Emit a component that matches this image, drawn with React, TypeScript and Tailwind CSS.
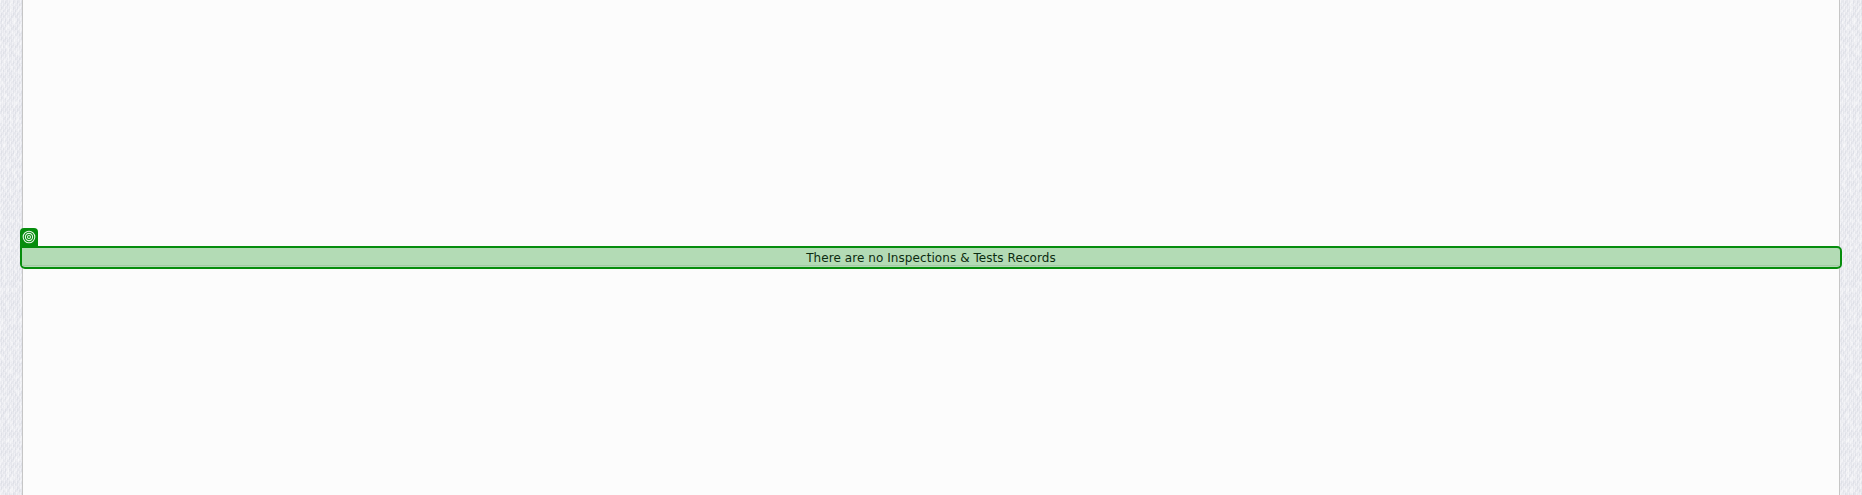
function Texture({ id }: { id: string }) {
  return (
    <svg className="block h-full w-full" aria-hidden="true">
      <defs>
        <pattern id={id} width="4" height="6" patternUnits="userSpaceOnUse">
          <rect width="4" height="6" fill="#e6e7ed" />
          <rect x="0" y="0" width="1" height="3" fill="#f0f0f5" />
          <rect x="2" y="3" width="1" height="3" fill="#f0f0f5" />
          <rect x="1" y="1" width="1" height="3" fill="#dee0e7" />
          <rect x="3" y="4" width="1" height="2" fill="#dee0e7" />
        </pattern>
        <filter id={`${id}-grain`} x="0" y="0" width="100%" height="100%">
          <feTurbulence type="fractalNoise" baseFrequency="0.3 0.16" numOctaves="3" seed="4" />
          <feColorMatrix values="0 0 0 0 1  0 0 0 0 1  0 0 0 0 1  1.4 0 0 0 -0.58" />
        </filter>
      </defs>
      <rect width="100%" height="100%" fill={`url(#${id})`} />
      <rect width="100%" height="100%" filter={`url(#${id}-grain)`} />
    </svg>
  );
}

function TargetIcon() {
  return (
    <svg className="block h-[14px] w-[14px]" viewBox="0 0 14 14" fill="none" stroke="#e3f3e4" strokeWidth="1.1" aria-hidden="true">
      <circle cx="7" cy="7" r="5.8" />
      <circle cx="7" cy="7" r="3.6" />
      <circle cx="7" cy="7" r="1.5" />
    </svg>
  );
}

export default function App() {
  return (
    <div className="flex h-[495px] w-full overflow-hidden bg-[#e9eaf0]">
      <div className="w-[22px] shrink-0">
        <Texture id="weave-left" />
      </div>
      <main className="relative min-w-0 flex-1 border-x border-[#c6c6c6] bg-[#fcfcfc]">
        <div className="absolute top-[228px] -right-[3px] -left-[3px]">
          <div className="flex h-[18px] w-[18px] items-center justify-center rounded-t-[4px] bg-[#068d0d]">
            <TargetIcon />
          </div>
          <div className="h-[23px] rounded-[5px] rounded-tl-none border-2 border-[#068d0d] bg-[#b3dbb5]">
            <div className="flex h-[18px] items-start justify-center border-b border-[#a4c9a6] pt-px font-['DejaVu_Sans',Verdana,sans-serif] text-[12px] leading-[18px] tracking-[0.07px] text-[#0c2b10]">
              There are no Inspections &amp; Tests Records
            </div>
          </div>
        </div>
      </main>
      <div className="w-[22px] shrink-0">
        <Texture id="weave-right" />
      </div>
    </div>
  );
}
